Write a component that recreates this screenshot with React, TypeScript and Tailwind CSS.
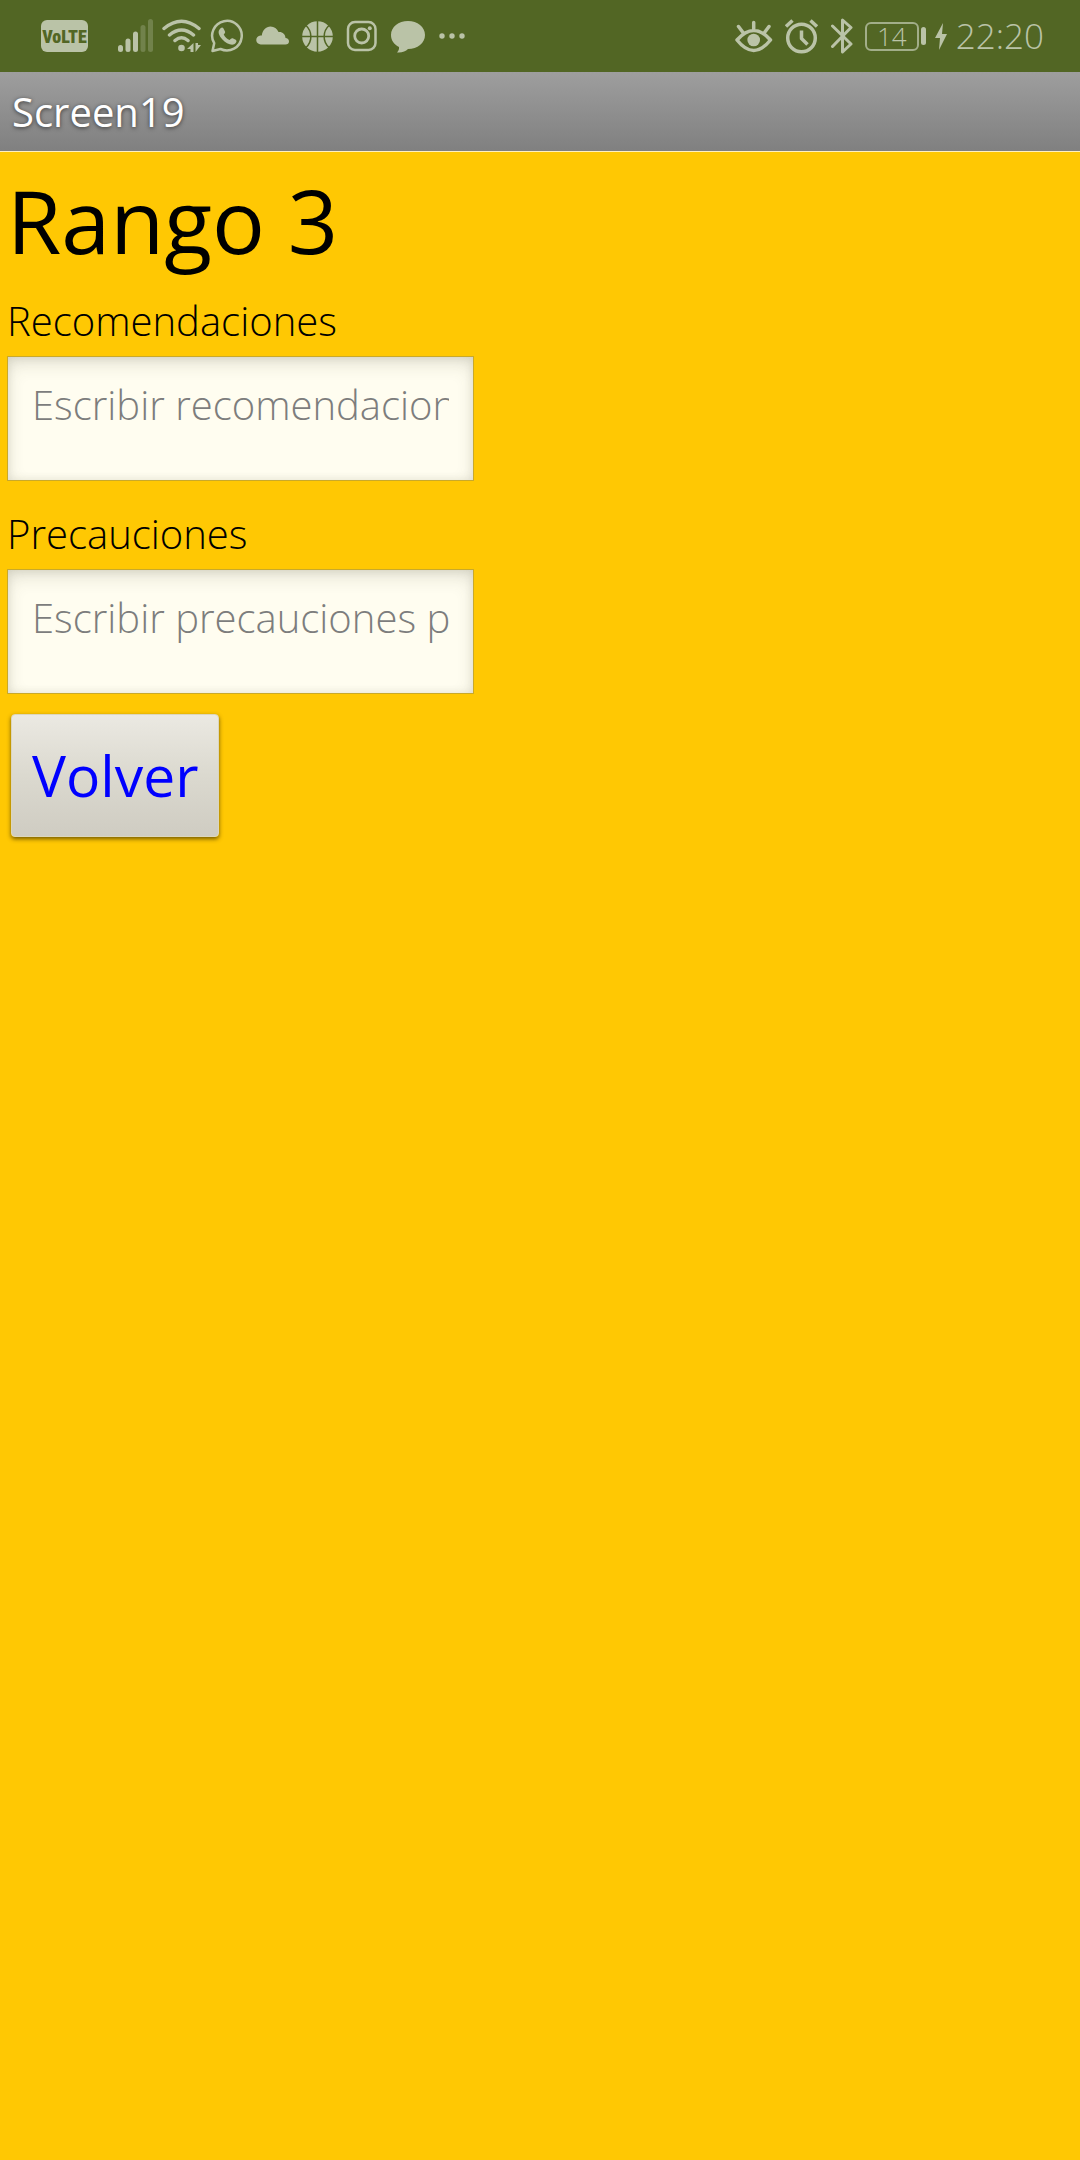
import type { ReactNode } from "react";

function StatusIcon({ width, children }: { width: number; children: ReactNode }) {
  return (
    <svg
      width={width}
      height={36}
      viewBox={`0 0 ${width} 36`}
      fill="none"
      stroke="#bac3a7"
      strokeWidth={2.5}
      strokeLinecap="round"
      strokeLinejoin="round"
      className="shrink-0"
      aria-hidden="true"
    >
      {children}
    </svg>
  );
}

const FILL = { fill: "#bac3a7", stroke: "none" };

function Signal() {
  return (
    <StatusIcon width={36}>
      <g {...FILL}>
        <rect x="0" y="27" width="5" height="7" rx="2.5" />
        <rect x="7.5" y="20.500" width="5" height="13.500" rx="2.5" />
        <rect x="15" y="13.500" width="5" height="20.500" rx="2.5" />
        <rect x="22.500" y="7" width="5" height="27" rx="2.5" opacity=".3" />
        <rect x="30" y="1" width="5" height="33" rx="2.5" opacity=".3" />
      </g>
    </StatusIcon>
  );
}

function Wifi() {
  return (
    <StatusIcon width={40}>
      <path strokeWidth="3.500" d="M2 10.500Q19.500-4 37 10.500M7.500 17Q19.500 7 31.500 17M13 22.500Q19.500 17 26 22.500" />
      <circle cx="19.500" cy="30" r="3.300" {...FILL} />
      <path {...FILL} d="M31.500 25v9h-3v-3H25zM33.500 25v9l5.500-7h-3v-2z" />
    </StatusIcon>
  );
}

function WhatsApp() {
  return (
    <StatusIcon width={34}>
      <path d="M2.500 33l1.700-7.800A14.800 14.800 0 1 1 10.500 31z" />
      <path
        {...FILL}
        d="M9.500 11.500c1.500-2.300 3-2.700 4-1l1.500 3c.5 1-.3 2-1.300 3 1.500 3 3.500 4.500 6 5.500 1.200-1.500 2-2.200 3-1.700l3 1.500c1.500.8.7 3.400-1.500 4.500-3 1.500-8.500-1-12-5s-4.500-7.500-2.700-9.800z"
      />
    </StatusIcon>
  );
}

function Cloud() {
  return (
    <StatusIcon width={34}>
      <path {...FILL} d="M5 26.500a4.500 4.500 0 0 1-.5-9c.7 0 1 0 1.300.1C6.500 12 10 8.500 14.500 8.500c3.800 0 6.500 2.200 8 5.600 3.800-.5 6.800 2 7 6 2 .2 3.500 1.500 3.500 3.300s-1.400 3.100-3.500 3.100z" />
    </StatusIcon>
  );
}

function Basketball() {
  return (
    <StatusIcon width={32}>
      <circle cx="15.500" cy="18.500" r="15.300" {...FILL} />
      <path
        stroke="#526624"
        strokeWidth="1.500"
        d="M15.500 2v33M-1 18.500h33M4 7.500c6.500 6 6.500 16 0 22M27 7.500c-6.500 6-6.500 16 0 22"
      />
    </StatusIcon>
  );
}

function Instagram() {
  return (
    <StatusIcon width={32}>
      <rect x="2" y="4" width="27.500" height="28" rx="7" />
      <circle cx="15.700" cy="18" r="7" strokeWidth="2.800" />
      <circle cx="23.800" cy="10.300" r="2" {...FILL} />
    </StatusIcon>
  );
}

function Bubble() {
  return (
    <StatusIcon width={36}>
      <path {...FILL} d="M18 3c9.500 0 17 6 17 14S27.500 31 18 31c-2.500 2.500-6 4-11 3.500 1.500-1.500 2.300-3.500 2-5.500C4 26.500 1 22.300 1 17 1 9 8.500 3 18 3z" />
    </StatusIcon>
  );
}

function More() {
  return (
    <StatusIcon width={28}>
      <g {...FILL}>
        <circle cx="4" cy="18" r="2.700" />
        <circle cx="14" cy="18" r="2.700" />
        <circle cx="24" cy="18" r="2.700" />
      </g>
    </StatusIcon>
  );
}

function Eye() {
  return (
    <StatusIcon width={38}>
      <path strokeWidth="3.500" d="M2 22Q18.700 3 35.500 22 18.700 43 2 22zM18.700 11V4.500M8 14.500L3.500 8.500M29.500 14.500L34 8.500" />
      <circle cx="18.700" cy="22" r="6.300" {...FILL} />
    </StatusIcon>
  );
}

function Alarm() {
  return (
    <StatusIcon width={34}>
      <circle cx="16.500" cy="20" r="13.800" strokeWidth="3.500" />
      <path strokeWidth="3.500" strokeLinecap="butt" d="M1 8.500L7.500 2.500M32 8.500L25.500 2.500M16.500 12.500V20.500L22.500 26.500" />
    </StatusIcon>
  );
}

function Bluetooth() {
  return (
    <StatusIcon width={22}>
      <path strokeWidth="3" d="M1.500 8L20 26 11.500 34V2L20 9.500 1.500 28.500" />
    </StatusIcon>
  );
}

function Bolt() {
  return (
    <StatusIcon width={14}>
      <path {...FILL} d="M9 5L1 20h5L5 32 13 16H8z" />
    </StatusIcon>
  );
}

function StatusBar() {
  return (
    <header className="flex h-[72px] items-center justify-between bg-[#526624] pr-9 pl-[41px] text-[#bac3a7]">
      <div className="flex items-center gap-3">
        <span className="mr-[18px] flex h-8 w-[47px] items-center justify-center rounded-md bg-[#bac3a7] font-['Liberation_Sans_Narrow','Roboto_Condensed',Roboto] text-[18px] font-black text-[#526624]">
          VoLTE
        </span>
        <div className="flex items-center gap-2">
          <Signal />
          <Wifi />
          <WhatsApp />
        </div>
        <Cloud />
        <Basketball />
        <Instagram />
        <Bubble />
        <More />
      </div>
      <div className="flex items-center">
        <div className="flex items-center gap-3">
          <Eye />
          <Alarm />
          <Bluetooth />
        </div>
        <div className="ml-3 flex items-center">
          <span className="flex h-[29px] w-[54px] items-center justify-center rounded-md border-2 border-[#a2ae89] text-[26px] leading-6 font-light">
            14
          </span>
          <span className="ml-0.5 h-[18px] w-[5px] rounded-full bg-[#bac3a7]" />
        </div>
        <span className="ml-2 flex">
          <Bolt />
        </span>
        <span className="ml-2 text-[35px] leading-[48px] font-light">22:20</span>
      </div>
    </header>
  );
}

function Field({ id, label, placeholder }: { id: string; label: string; placeholder: string }) {
  return (
    <div className="flex flex-col items-start">
      <label htmlFor={id} className="text-[40px] leading-[58px] font-light">
        {label}
      </label>
      <input
        id={id}
        type="text"
        placeholder={placeholder}
        className="mt-1.5 h-[125px] w-[467px] max-w-full border border-[#c9a92a] bg-[#fffdf0] px-6 pb-7 text-[40px] font-light text-black shadow-[inset_0_8px_20px_-4px_rgba(70,70,50,0.2),inset_0_0_10px_rgba(70,70,50,0.12)] outline-none placeholder:text-[#7d7d7d]"
      />
    </div>
  );
}

export default function App() {
  return (
    <div className="flex min-h-screen flex-col bg-[#ffc803] font-['Open_Sans','Noto_Sans',sans-serif] text-black">
      <StatusBar />
      <div className="border-b border-[#fff0c0] bg-linear-to-b from-[#9e9e9e] to-[#808080] px-3 py-3 text-[40px] leading-[55px] text-white [text-shadow:0_1px_4px_rgba(0,0,0,0.6)]">
        Screen19
      </div>
      <main className="flex flex-col items-start px-[7px]">
        <h1 className="pt-2 text-[88px] leading-[120px]">Rango 3</h1>
        <form className="mt-3 flex max-w-full flex-col items-start gap-6">
          <Field id="recomendaciones" label="Recomendaciones" placeholder="Escribir recomendaciones" />
          <Field id="precauciones" label="Precauciones" placeholder="Escribir precauciones para" />
          <button
            type="button"
            className="-mt-1 ml-1 h-[123px] rounded-sm border border-[#dcd6bc] bg-linear-to-b from-[#ebe9e2] via-[#dbd9cf] to-[#cfccc2] px-5 text-[57px] text-[#0000ff] shadow-[0_2px_4px_rgba(80,60,0,0.8)]"
          >
            Volver
          </button>
        </form>
      </main>
    </div>
  );
}
